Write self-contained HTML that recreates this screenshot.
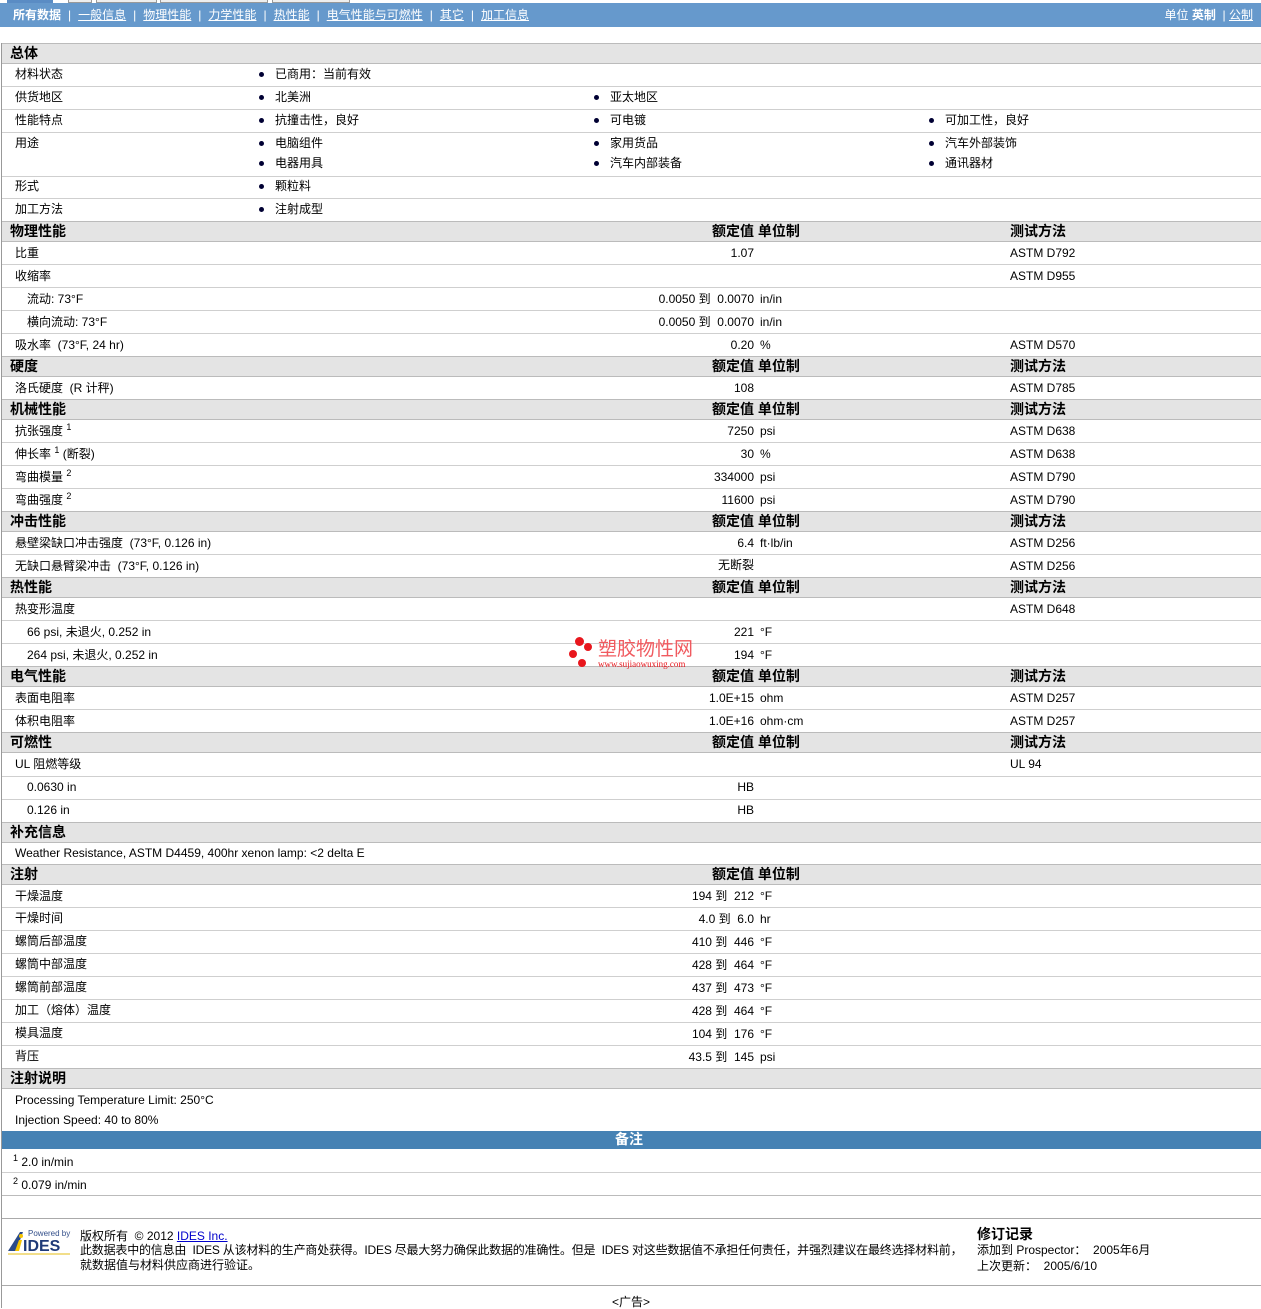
<!DOCTYPE html>
<html><head><meta charset="utf-8">
<style>
*{margin:0;padding:0;box-sizing:border-box}
body{width:1261px;height:1308px;position:relative;background:#fff;font-family:"Liberation Sans","Noto Sans CJK SC",sans-serif;font-size:12px;color:#000;overflow:hidden}
.t{position:absolute;line-height:14px;white-space:nowrap}
.v{position:absolute;right:507px;line-height:14px;white-space:nowrap;text-align:right}
.b{font-weight:bold;font-size:14px}
.band{position:absolute;left:2px;right:0;background:#e4e4e4;border-top:1px solid #bbb;border-bottom:1px solid #bbb}
.ln{position:absolute;left:2px;right:0;height:1px;background:#cfcfcf}
.bu{position:absolute;width:5px;height:5px;border-radius:50%;background:#000033}
sup{font-size:9px;vertical-align:5px;line-height:0}
.nav a{color:#fff;text-decoration:underline}
.nav i{font-style:normal;padding:0 7px}
</style></head><body>
<div style="position:absolute;left:7px;top:0;width:46px;height:3px;background:#5a8cc4"></div>
<div style="position:absolute;left:68px;top:0;width:24px;height:3px;background:#eee;border:1px solid #999;border-top:0"></div>
<div style="position:absolute;left:96px;top:0;width:61px;height:3px;background:#eee;border:1px solid #999;border-top:0"></div>
<div style="position:absolute;left:160px;top:0;width:108px;height:3px;background:#eee;border:1px solid #999;border-top:0"></div>
<div style="position:absolute;left:272px;top:0;width:78px;height:3px;background:#eee;border:1px solid #999;border-top:0"></div>
<div class="nav" style="position:absolute;left:0;top:3px;width:1261px;height:24px;background:#6699cc;color:#fff">
<div class="t" style="left:13px;top:5px"><b>所有数据</b><i>|</i><a>一般信息</a><i>|</i><a>物理性能</a><i>|</i><a>力学性能</a><i>|</i><a>热性能</a><i>|</i><a>电气性能与可燃性</a><i>|</i><a>其它</a><i>|</i><a>加工信息</a></div>
<div class="t" style="right:8px;top:5px">单位 <b>英制</b> &nbsp;| <a>公制</a></div>
</div>
<div style="position:absolute;left:1px;top:43px;width:1px;height:1265px;background:#999"></div>

<div class="band" style="top:43px;height:21px"></div>
<div class="band" style="top:221px;height:21px"></div>
<div class="band" style="top:356px;height:21px"></div>
<div class="band" style="top:399px;height:21px"></div>
<div class="band" style="top:511px;height:21px"></div>
<div class="band" style="top:577px;height:21px"></div>
<div class="band" style="top:666px;height:21px"></div>
<div class="band" style="top:732px;height:21px"></div>
<div class="band" style="top:822px;height:21px"></div>
<div class="band" style="top:864px;height:21px"></div>
<div class="band" style="top:1068px;height:21px"></div>
<div style="position:absolute;left:2px;right:0;top:1131px;height:18px;background:#4682b4"></div>
<div class="t b" style="left:615px;top:1132px;color:#fff">备注</div>

<div class="ln" style="top:86px"></div><div class="ln" style="top:109px"></div><div class="ln" style="top:132px"></div><div class="ln" style="top:176px"></div><div class="ln" style="top:198px"></div>
<div class="ln" style="top:264px"></div><div class="ln" style="top:287px"></div><div class="ln" style="top:310px"></div><div class="ln" style="top:333px"></div>
<div class="ln" style="top:442px"></div><div class="ln" style="top:465px"></div><div class="ln" style="top:488px"></div>
<div class="ln" style="top:554px"></div><div class="ln" style="top:620px"></div><div class="ln" style="top:643px"></div>
<div class="ln" style="top:709px"></div><div class="ln" style="top:776px"></div><div class="ln" style="top:799px"></div>
<div class="ln" style="top:907px"></div><div class="ln" style="top:930px"></div><div class="ln" style="top:953px"></div><div class="ln" style="top:976px"></div><div class="ln" style="top:999px"></div><div class="ln" style="top:1022px"></div><div class="ln" style="top:1045px"></div>
<div class="ln" style="top:1172px"></div><div class="ln" style="top:1195px;background:#bbb"></div>
<div class="ln" style="top:1218px;background:#aaa"></div><div class="ln" style="top:1285px;background:#aaa"></div>

<div class="t b" style="left:10px;top:46px">总体</div>
<div class="t b" style="left:10px;top:224px">物理性能</div>
<div class="t b" style="left:10px;top:359px">硬度</div>
<div class="t b" style="left:10px;top:402px">机械性能</div>
<div class="t b" style="left:10px;top:514px">冲击性能</div>
<div class="t b" style="left:10px;top:580px">热性能</div>
<div class="t b" style="left:10px;top:669px">电气性能</div>
<div class="t b" style="left:10px;top:735px">可燃性</div>
<div class="t b" style="left:10px;top:825px">补充信息</div>
<div class="t b" style="left:10px;top:867px">注射</div>
<div class="t b" style="left:10px;top:1071px">注射说明</div>
<div class="t b" style="left:712px;top:224px">额定值 单位制</div><div class="t b" style="left:1010px;top:224px">测试方法</div>
<div class="t b" style="left:712px;top:359px">额定值 单位制</div><div class="t b" style="left:1010px;top:359px">测试方法</div>
<div class="t b" style="left:712px;top:402px">额定值 单位制</div><div class="t b" style="left:1010px;top:402px">测试方法</div>
<div class="t b" style="left:712px;top:514px">额定值 单位制</div><div class="t b" style="left:1010px;top:514px">测试方法</div>
<div class="t b" style="left:712px;top:580px">额定值 单位制</div><div class="t b" style="left:1010px;top:580px">测试方法</div>
<div class="t b" style="left:712px;top:669px">额定值 单位制</div><div class="t b" style="left:1010px;top:669px">测试方法</div>
<div class="t b" style="left:712px;top:735px">额定值 单位制</div><div class="t b" style="left:1010px;top:735px">测试方法</div>
<div class="t b" style="left:712px;top:867px">额定值 单位制</div>

<div class="t" style="left:15px;top:67px">材料状态</div>
<div class="bu" style="left:259px;top:72px"></div><div class="t" style="left:275px;top:67px">已商用：当前有效</div>
<div class="t" style="left:15px;top:90px">供货地区</div>
<div class="bu" style="left:259px;top:95px"></div><div class="t" style="left:275px;top:90px">北美洲</div>
<div class="bu" style="left:594px;top:95px"></div><div class="t" style="left:610px;top:90px">亚太地区</div>
<div class="t" style="left:15px;top:113px">性能特点</div>
<div class="bu" style="left:259px;top:118px"></div><div class="t" style="left:275px;top:113px">抗撞击性，良好</div>
<div class="bu" style="left:594px;top:118px"></div><div class="t" style="left:610px;top:113px">可电镀</div>
<div class="bu" style="left:929px;top:118px"></div><div class="t" style="left:945px;top:113px">可加工性，良好</div>
<div class="t" style="left:15px;top:136px">用途</div>
<div class="bu" style="left:259px;top:141px"></div><div class="t" style="left:275px;top:136px">电脑组件</div>
<div class="bu" style="left:594px;top:141px"></div><div class="t" style="left:610px;top:136px">家用货品</div>
<div class="bu" style="left:929px;top:141px"></div><div class="t" style="left:945px;top:136px">汽车外部装饰</div>
<div class="bu" style="left:259px;top:161px"></div><div class="t" style="left:275px;top:156px">电器用具</div>
<div class="bu" style="left:594px;top:161px"></div><div class="t" style="left:610px;top:156px">汽车内部装备</div>
<div class="bu" style="left:929px;top:161px"></div><div class="t" style="left:945px;top:156px">通讯器材</div>
<div class="t" style="left:15px;top:179px">形式</div>
<div class="bu" style="left:259px;top:184px"></div><div class="t" style="left:275px;top:179px">颗粒料</div>
<div class="t" style="left:15px;top:202px">加工方法</div>
<div class="bu" style="left:259px;top:207px"></div><div class="t" style="left:275px;top:202px">注射成型</div>

<div class="t" style="left:15px;top:246px">比重</div><div class="v" style="top:246px">1.07</div><div class="t" style="left:1010px;top:246px">ASTM D792</div>
<div class="t" style="left:15px;top:269px">收缩率</div><div class="t" style="left:1010px;top:269px">ASTM D955</div>
<div class="t" style="left:27px;top:292px">流动: 73°F</div><div class="v" style="top:292px">0.0050 到&nbsp; 0.0070</div><div class="t" style="left:760px;top:292px">in/in</div>
<div class="t" style="left:27px;top:315px">横向流动: 73°F</div><div class="v" style="top:315px">0.0050 到&nbsp; 0.0070</div><div class="t" style="left:760px;top:315px">in/in</div>
<div class="t" style="left:15px;top:338px">吸水率&nbsp; (73°F, 24 hr)</div><div class="v" style="top:338px">0.20</div><div class="t" style="left:760px;top:338px">%</div><div class="t" style="left:1010px;top:338px">ASTM D570</div>
<div class="t" style="left:15px;top:381px">洛氏硬度&nbsp; (R 计秤)</div><div class="v" style="top:381px">108</div><div class="t" style="left:1010px;top:381px">ASTM D785</div>

<div class="t" style="left:15px;top:424px">抗张强度 <sup>1</sup></div><div class="v" style="top:424px">7250</div><div class="t" style="left:760px;top:424px">psi</div><div class="t" style="left:1010px;top:424px">ASTM D638</div>
<div class="t" style="left:15px;top:447px">伸长率 <sup>1</sup> (断裂)</div><div class="v" style="top:447px">30</div><div class="t" style="left:760px;top:447px">%</div><div class="t" style="left:1010px;top:447px">ASTM D638</div>
<div class="t" style="left:15px;top:470px">弯曲模量 <sup>2</sup></div><div class="v" style="top:470px">334000</div><div class="t" style="left:760px;top:470px">psi</div><div class="t" style="left:1010px;top:470px">ASTM D790</div>
<div class="t" style="left:15px;top:493px">弯曲强度 <sup>2</sup></div><div class="v" style="top:493px">11600</div><div class="t" style="left:760px;top:493px">psi</div><div class="t" style="left:1010px;top:493px">ASTM D790</div>

<div class="t" style="left:15px;top:536px">悬壁梁缺口冲击强度&nbsp; (73°F, 0.126 in)</div><div class="v" style="top:536px">6.4</div><div class="t" style="left:760px;top:536px">ft·lb/in</div><div class="t" style="left:1010px;top:536px">ASTM D256</div>
<div class="t" style="left:15px;top:559px">无缺口悬臂梁冲击&nbsp; (73°F, 0.126 in)</div><div class="v" style="top:558px">无断裂</div><div class="t" style="left:1010px;top:559px">ASTM D256</div>

<div class="t" style="left:15px;top:602px">热变形温度</div><div class="t" style="left:1010px;top:602px">ASTM D648</div>
<div class="t" style="left:27px;top:625px">66 psi, 未退火, 0.252 in</div><div class="v" style="top:625px">221</div><div class="t" style="left:760px;top:625px">°F</div>
<div class="t" style="left:27px;top:648px">264 psi, 未退火, 0.252 in</div><div class="v" style="top:648px">194</div><div class="t" style="left:760px;top:648px">°F</div>
<div style="position:absolute;left:575px;top:637px;width:9px;height:9px;border-radius:50%;background:#e8161d"></div>
<div style="position:absolute;left:584px;top:643px;width:8px;height:8px;border-radius:50%;background:#e8161d"></div>
<div style="position:absolute;left:569px;top:650px;width:8px;height:8px;border-radius:50%;background:#e8161d"></div>
<div style="position:absolute;left:578px;top:659px;width:8px;height:8px;border-radius:50%;background:#e8161d"></div>
<div class="t" style="left:598px;top:640px;color:#f05a5f;font-size:19px;line-height:20px">塑胶物性网</div>
<div class="t" style="left:598px;top:660px;color:#e8161d;font-size:9px;line-height:9px;font-family:'Liberation Serif',serif">www.sujiaowuxing.com</div>

<div class="t" style="left:15px;top:691px">表面电阻率</div><div class="v" style="top:691px">1.0E+15</div><div class="t" style="left:760px;top:691px">ohm</div><div class="t" style="left:1010px;top:691px">ASTM D257</div>
<div class="t" style="left:15px;top:714px">体积电阻率</div><div class="v" style="top:714px">1.0E+16</div><div class="t" style="left:760px;top:714px">ohm·cm</div><div class="t" style="left:1010px;top:714px">ASTM D257</div>

<div class="t" style="left:15px;top:757px">UL 阻燃等级</div><div class="t" style="left:1010px;top:757px">UL 94</div>
<div class="t" style="left:27px;top:780px">0.0630 in</div><div class="v" style="top:780px">HB</div>
<div class="t" style="left:27px;top:803px">0.126 in</div><div class="v" style="top:803px">HB</div>

<div class="t" style="left:15px;top:846px">Weather Resistance, ASTM D4459, 400hr xenon lamp: &lt;2 delta E</div>

<div class="t" style="left:15px;top:889px">干燥温度</div><div class="v" style="top:889px">194 到&nbsp; 212</div><div class="t" style="left:760px;top:889px">°F</div>
<div class="t" style="left:15px;top:911px">干燥时间</div><div class="v" style="top:912px">4.0 到&nbsp; 6.0</div><div class="t" style="left:760px;top:912px">hr</div>
<div class="t" style="left:15px;top:934px">螺筒后部温度</div><div class="v" style="top:935px">410 到&nbsp; 446</div><div class="t" style="left:760px;top:935px">°F</div>
<div class="t" style="left:15px;top:957px">螺筒中部温度</div><div class="v" style="top:958px">428 到&nbsp; 464</div><div class="t" style="left:760px;top:958px">°F</div>
<div class="t" style="left:15px;top:980px">螺筒前部温度</div><div class="v" style="top:981px">437 到&nbsp; 473</div><div class="t" style="left:760px;top:981px">°F</div>
<div class="t" style="left:15px;top:1003px">加工（熔体）温度</div><div class="v" style="top:1004px">428 到&nbsp; 464</div><div class="t" style="left:760px;top:1004px">°F</div>
<div class="t" style="left:15px;top:1026px">模具温度</div><div class="v" style="top:1027px">104 到&nbsp; 176</div><div class="t" style="left:760px;top:1027px">°F</div>
<div class="t" style="left:15px;top:1049px">背压</div><div class="v" style="top:1050px">43.5 到&nbsp; 145</div><div class="t" style="left:760px;top:1050px">psi</div>

<div class="t" style="left:15px;top:1093px">Processing Temperature Limit: 250°C</div>
<div class="t" style="left:15px;top:1113px">Injection Speed: 40 to 80%</div>

<div class="t" style="left:13px;top:1155px"><sup>1</sup> 2.0 in/min</div>
<div class="t" style="left:13px;top:1178px"><sup>2</sup> 0.079 in/min</div>

<svg style="position:absolute;left:6px;top:1227px" width="66" height="30" viewBox="0 0 66 30">
<text x="22" y="9" font-family="Liberation Sans" font-size="8" fill="#334f8a">Powered by</text>
<polygon points="2,24 14,5 17,5 10,24" fill="#2a4a8a"/>
<circle cx="15" cy="9" r="2" fill="#f5c400"/>
<polygon points="9,24 13,13 16,13 13,24" fill="#f5c400"/>
<text x="17" y="24" font-family="Liberation Sans" font-weight="bold" font-size="16" fill="#1f3a78">IDES</text>
<rect x="2" y="26" width="62" height="2" fill="#f2de8a"/>
</svg>
<div class="t" style="left:80px;top:1229px">版权所有&nbsp; © 2012 <span style="color:#00c;text-decoration:underline">IDES Inc.</span></div>
<div class="t" style="left:80px;top:1243px;letter-spacing:-0.2px">此数据表中的信息由&nbsp; IDES 从该材料的生产商处获得。IDES 尽最大努力确保此数据的准确性。但是&nbsp; IDES 对这些数据值不承担任何责任，并强烈建议在最终选择材料前，</div>
<div class="t" style="left:80px;top:1258px">就数据值与材料供应商进行验证。</div>
<div class="t b" style="left:977px;top:1227px">修订记录</div>
<div class="t" style="left:977px;top:1243px">添加到 Prospector：&nbsp; 2005年6月</div>
<div class="t" style="left:977px;top:1259px">上次更新：&nbsp; 2005/6/10</div>
<div class="t" style="left:612px;top:1295px">&lt;广告&gt;</div>
</body></html>
